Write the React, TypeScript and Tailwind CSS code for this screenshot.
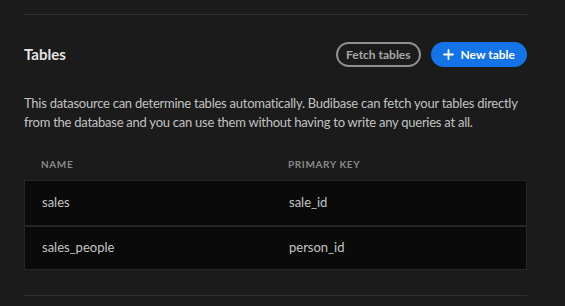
const rows = [
  { name: "sales", key: "sale_id" },
  { name: "sales_people", key: "person_id" },
];

const PlusIcon = () => (
  <svg width="11" height="11" viewBox="0 0 11 11" fill="none" stroke="currentColor" strokeWidth="1.8" strokeLinecap="round">
    <path d="M5.5 1v9M1 5.5h9" />
  </svg>
);

export default function App() {
  return (
    <div
      className="h-[306px] w-[565px] overflow-hidden bg-[#1b1b1b] pt-[14px] pl-6 pr-[38px]"
      style={{ fontFamily: "Lato, 'Noto Sans', sans-serif" }}
    >
      <div className="h-px bg-[#2f2f2f]" />

      <div className="mt-[27px] flex h-[25px] items-center justify-between">
        <h2 className="text-[15px] font-bold text-[#e3e3e3]">Tables</h2>
        <div className="flex gap-[10px]">
          <button className="flex h-[25px] items-center rounded-full border-2 border-[#8f8f8f] px-[8px] text-[12px] font-bold text-[#a8a8a8]">
            Fetch tables
          </button>
          <button className="flex h-[25px] items-center gap-[7px] rounded-full bg-[#1473e6] pr-[12px] pl-[12px] text-[12px] font-bold text-white">
            <PlusIcon />
            New table
          </button>
        </div>
      </div>

      <p className="mt-[27px] text-[13px] leading-[19px] tracking-[-0.25px] text-[#c2c2c2]">
        This datasource can determine tables automatically. Budibase can fetch your tables directly from the database
        and you can use them without having to write any queries at all.
      </p>

      <div className="mt-[25px] grid grid-cols-[247px_1fr] px-[17px] pb-[8px] text-[10px] font-bold tracking-[0.06em] text-[#8a8a8a] uppercase">
        <span>Name</span>
        <span>Primary key</span>
      </div>

      <div className="border border-[#262626] bg-[#0a0a0a]">
        {rows.map((r, i) => (
          <div
            key={r.name}
            className={`grid h-[44px] grid-cols-[247px_1fr] items-center px-[17px] text-[13px] text-[#c4c4c4] ${
              i > 0 ? "border-t-2 border-[#262626]" : ""
            }`}
          >
            <span>{r.name}</span>
            <span>{r.key}</span>
          </div>
        ))}
      </div>

      <div className="mt-[25px] h-px bg-[#2f2f2f]" />
    </div>
  );
}
